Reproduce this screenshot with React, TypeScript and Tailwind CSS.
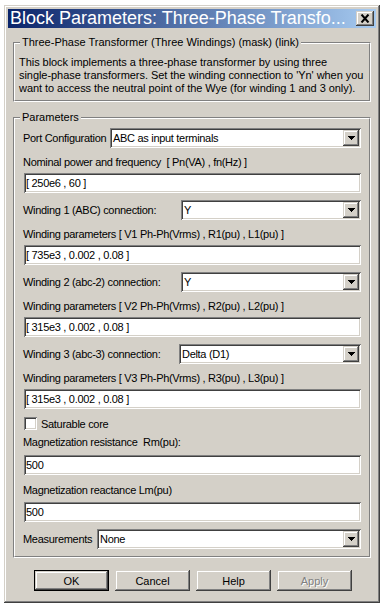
import React from "react";

const RAISED =
  "shadow-[inset_-1px_-1px_#404040,inset_1px_1px_#d4d0c8,inset_-2px_-2px_#808080,inset_2px_2px_#ffffff]";
const SUNKEN =
  "shadow-[inset_1px_1px_#808080,inset_-1px_-1px_#ffffff,inset_2px_2px_#404040,inset_-2px_-2px_#d4d0c8]";

function Arrow() {
  return (
    <svg width="7" height="4" viewBox="0 0 7 4" shapeRendering="crispEdges">
      <rect x="0" y="0" width="7" height="1" fill="#000" />
      <rect x="1" y="1" width="5" height="1" fill="#000" />
      <rect x="2" y="2" width="3" height="1" fill="#000" />
      <rect x="3" y="3" width="1" height="1" fill="#000" />
    </svg>
  );
}

function Select({ value, className }: { value: string; className: string }) {
  return (
    <div className={`flex h-[20px] shrink-0 items-center bg-white ${SUNKEN} ${className}`}>
      <div className="flex-1 pl-[3px] leading-[14px] whitespace-nowrap">{value}</div>
      <div className={`m-[2px] flex h-[16px] w-[16px] items-center justify-center bg-[#d4d0c8] ${RAISED}`}>
        <Arrow />
      </div>
    </div>
  );
}

function Input({ value, className = "" }: { value: string; className?: string }) {
  return (
    <div className={`flex h-[20px] items-center bg-white pl-[2px] ${SUNKEN} ${className}`}>
      <span className="leading-[14px] whitespace-nowrap">{value}</span>
    </div>
  );
}

function Label({ text, className = "" }: { text: string; className?: string }) {
  return <div className={`h-[14px] leading-[14px] whitespace-pre ${className}`}>{text}</div>;
}

function Group({
  title,
  className,
  children,
}: {
  title: string;
  className: string;
  children: React.ReactNode;
}) {
  return (
    <div className={`relative border border-[#808080] border-r-white border-b-white ${className}`}>
      <div className="h-full border border-white border-r-[#808080] border-b-[#808080]">{children}</div>
      <span className="absolute left-[6px] top-[-7px] bg-[#d4d0c8] px-[2px] leading-[13px] whitespace-nowrap">
        {title}
      </span>
    </div>
  );
}

function Button({ text, isDefault = false, disabled = false }: { text: string; isDefault?: boolean; disabled?: boolean }) {
  const inner = (
    <div className={`flex h-full w-full items-center justify-center bg-[#d4d0c8] ${RAISED}`}>
      <span
        className={
          disabled
            ? "text-[#808080] [text-shadow:1px_1px_0_#ffffff] leading-[14px]"
            : "leading-[14px]"
        }
      >
        {text}
      </span>
    </div>
  );
  if (isDefault) {
    return <div className="h-[21px] w-[75px] border border-black">{inner}</div>;
  }
  return <div className="h-[21px] w-[75px]">{inner}</div>;
}

function ConnRow({ label, value, width, className = "" }: { label: string; value: string; width: string; className?: string }) {
  return (
    <div className={`flex h-[20px] items-center justify-between ${className}`}>
      <span className="leading-[14px] whitespace-nowrap">{label}</span>
      <Select value={value} className={width} />
    </div>
  );
}

export default function App() {
  return (
    <div className="h-[605px] w-[386px] overflow-hidden bg-white pl-[4px] pt-[5px] font-['Liberation_Sans',Arial,sans-serif] text-[11px] text-black">
      <div className={`flex h-[598px] w-[376px] flex-col bg-[#d4d0c8] p-[4px] ${RAISED}`}>
        {/* Title bar */}
        <div className="flex h-[19px] items-center bg-[linear-gradient(to_right,#0a246a,#a6caf0)] pl-[2px]">
          <div className="flex-1 whitespace-nowrap text-[18px] leading-[19px] text-white">
            Block Parameters: Three-Phase Transfo...
          </div>
          <div className={`mr-[2px] flex h-[15px] w-[18px] items-center justify-center bg-[#d4d0c8] ${RAISED}`}>
            <svg width="10" height="9" viewBox="0 0 10 9">
              <path d="M1.5 0.5 L8.5 8.5 M8.5 0.5 L1.5 8.5" stroke="#000" strokeWidth="2" />
            </svg>
          </div>
        </div>

        <div className="px-[5px]">
          <Group title="Three-Phase Transformer (Three Windings) (mask) (link)" className="mt-[14px] h-[60px]">
            <div className="pl-[4px] pt-[12px] leading-[13px] whitespace-nowrap tracking-[-0.05px]">
              This block implements a three-phase transformer by using three
              <br />
              single-phase transformers. Set the winding connection to 'Yn' when you
              <br />
              want to access the neutral point of the Wye (for winding 1 and 3 only).
            </div>
          </Group>

          <Group title="Parameters" className="mt-[15px] h-[441px]">
            <div className="flex flex-col pl-[8px] pr-[8px] pt-[9px] tracking-[-0.3px]">
              <ConnRow label="Port Configuration" value="ABC as input terminals" width="w-[251px]" />

              <Label text="Nominal power and frequency  [ Pn(VA) , fn(Hz) ]" className="mt-[7px]" />
              <Input value="[ 250e6 , 60 ]" className="ml-[1px] mt-[4px]" />

              <ConnRow label="Winding 1 (ABC) connection:" value="Y" width="w-[180px]" className="mt-[7px]" />
              <Label text="Winding parameters [ V1 Ph-Ph(Vrms) , R1(pu) , L1(pu) ]" className="mt-[7px]" />
              <Input value="[ 735e3 , 0.002 , 0.08 ]" className="ml-[1px] mt-[4px]" />

              <ConnRow label="Winding 2 (abc-2) connection:" value="Y" width="w-[180px]" className="mt-[7px]" />
              <Label text="Winding parameters [ V2 Ph-Ph(Vrms) , R2(pu) , L2(pu) ]" className="mt-[7px]" />
              <Input value="[ 315e3 , 0.002 , 0.08 ]" className="ml-[1px] mt-[4px]" />

              <ConnRow label="Winding 3 (abc-3) connection:" value="Delta (D1)" width="w-[182px]" className="mt-[7px]" />
              <Label text="Winding parameters [ V3 Ph-Ph(Vrms) , R3(pu) , L3(pu) ]" className="mt-[7px]" />
              <Input value="[ 315e3 , 0.002 , 0.08 ]" className="ml-[1px] mt-[4px]" />

              <div className="mt-[8px] flex h-[13px] items-center">
                <div className={`ml-[1px] h-[13px] w-[13px] bg-white ${SUNKEN}`} />
                <span className="ml-[4px] leading-[14px] whitespace-nowrap">Saturable core</span>
              </div>

              <Label text="Magnetization resistance  Rm(pu):" className="mt-[5px]" />
              <Input value="500" className="ml-[1px] mt-[6px]" />

              <Label text="Magnetization reactance Lm(pu)" className="mt-[8px]" />
              <Input value="500" className="ml-[1px] mt-[5px]" />

              <ConnRow label="Measurements" value="None" width="w-[264px]" className="mt-[7px]" />
            </div>
          </Group>

          <div className="mt-[12px] flex gap-[6px] pl-[21px]">
            <Button text="OK" isDefault />
            <Button text="Cancel" />
            <Button text="Help" />
            <Button text="Apply" disabled />
          </div>
        </div>
      </div>
    </div>
  );
}
